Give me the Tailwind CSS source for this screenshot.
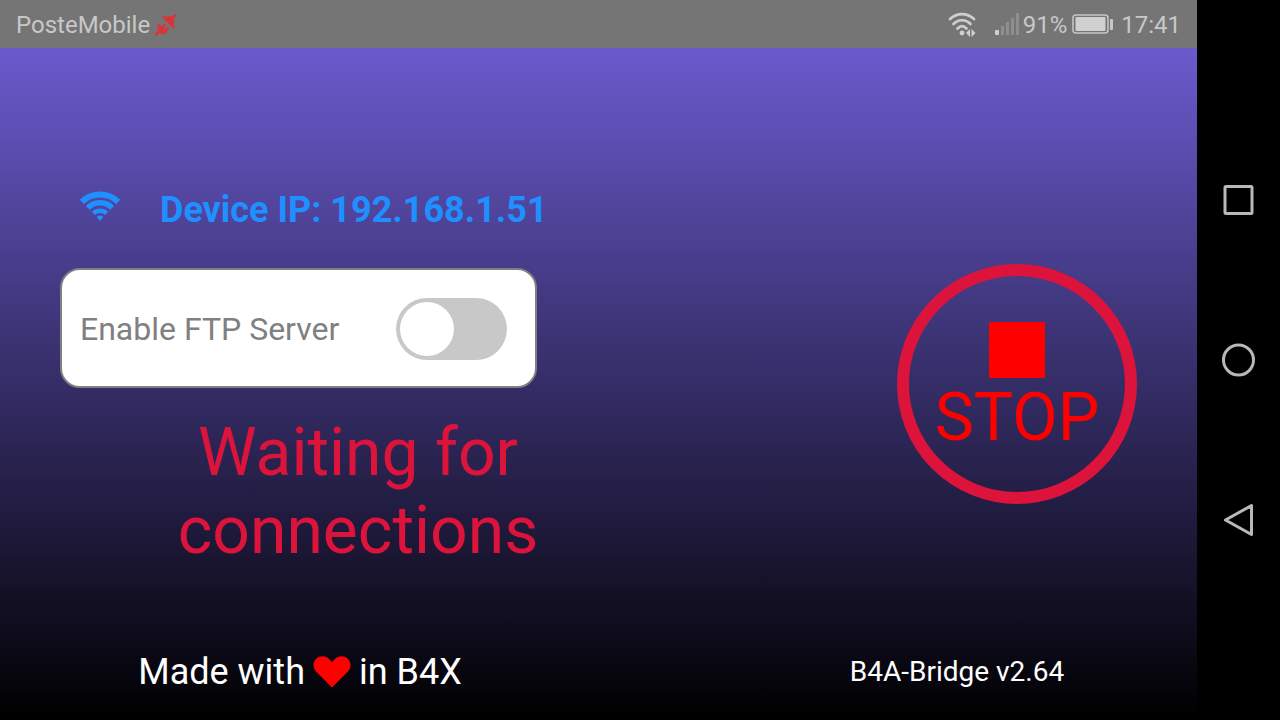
<!DOCTYPE html>
<html lang="en">
<head>
  <meta charset="UTF-8" />
  <meta name="viewport" content="width=device-width, initial-scale=1.0" />
  <title>B4A-Bridge</title>
  <script src="https://cdn.jsdelivr.net/npm/@tailwindcss/browser@4"></script>
</head>
<body class="flex min-h-screen bg-black font-['Roboto',sans-serif]">

  <div class="flex flex-1 flex-col">

    <!-- Status bar -->
    <header class="flex h-12 items-center justify-between bg-[#757575] px-4 pt-px text-2xl text-[#c8c8c8]">
      <div class="flex items-center gap-1">
        <span>PosteMobile</span>
        <svg class="h-6 w-6" viewBox="0 0 24 24" fill="#d6363b" stroke="#d6363b" stroke-linecap="round">
          <path d="M5 10.500L13.500 19c-2.500 2.500-6 2.800-8.300.7S2.500 13 5 10.500z" stroke="none" />
          <path d="M10.500 5c2.500-2.500 6-2.800 8.200-.7S21 10.500 18.500 13z" stroke="none" />
          <path d="M2 21.500l2.500-2.500M18.500 5L21 2.500M9.500 4L19.500 14M9 14l2-2M12 17l2-2" fill="none" stroke-width="2.500" />
        </svg>
      </div>
      <div class="flex items-center">
        <svg class="mr-4 h-7 w-8" viewBox="0 0 32 28" fill="none" stroke="#cfcfcf" stroke-width="2.700" stroke-linecap="round">
          <path d="M3 8c7-6.500 17-6.500 24 0M6.500 13c5-5 12-5 17 0M10.500 17.500c3-3 6-3 9 0" />
          <circle cx="15" cy="22" r="2.400" fill="#cfcfcf" stroke="none" />
          <path d="M23 18v8l-4-4zM24.500 18v8l4-4z" fill="#cfcfcf" stroke="none" />
        </svg>
        <svg class="mr-1 h-6 w-6" viewBox="0 0 24 24" fill="#8e8e8e">
          <rect x="0" y="17" width="4" height="5" rx="1" fill="#d0d0d0" />
          <rect x="6" y="13" width="3" height="9" />
          <rect x="11" y="9" width="3" height="13" />
          <rect x="16" y="5" width="3" height="17" />
          <rect x="21" y="0" width="3" height="22" />
        </svg>
        <span>91%</span>
        <svg class="ml-1 mr-2 h-6 w-[42px]" viewBox="0 0 42 24" fill="none">
          <rect x="2" y="2" width="35" height="18" rx="3" stroke="#c8c8c8" stroke-width="1.500" />
          <rect x="4.500" y="4" width="30" height="14" rx="1" fill="#d0d0d0" />
          <rect x="39" y="6" width="3" height="11" rx="1" fill="#c8c8c8" />
        </svg>
        <span>17:41</span>
      </div>
    </header>

    <main class="flex flex-1 flex-col bg-[linear-gradient(to_bottom,#6a5acd,#000000)]">
      <div class="flex flex-1 items-center justify-between px-[60px] pt-24">

        <section class="w-[596px] pb-[18px]">
          <div class="flex h-[60px] items-center pl-5 text-[#1e90ff]">
            <svg class="mr-10 mb-2 h-[30px] w-10" viewBox="0 0 40 30" fill="none" stroke="#1e90ff">
              <path d="M1.900 10.900A26 26 0 0 1 38.100 10.900" stroke-width="6" />
              <path d="M7.800 16.900A17.300 17.300 0 0 1 32.200 16.900" stroke-width="5.500" />
              <path d="M13.400 22.400A9.500 9.500 0 0 1 26.600 22.400" stroke-width="4.500" />
              <path d="M16.800 26q3.200-2.800 6.400 0L20 30z" fill="#1e90ff" stroke="none" />
            </svg>
            <p class="text-4xl font-bold">Device IP: 192.168.1.51</p>
          </div>

          <!-- FTP switch -->
          <div class="mt-7 flex h-[120px] w-[477px] items-center justify-between rounded-[20px] border-2 border-[#808080] bg-white pl-[18px] pr-7 pt-px">
            <label for="ftp" class="text-[32px] text-[#808080]">Enable FTP Server</label>
            <input id="ftp" type="checkbox" class="h-[62px] w-[111px] appearance-none rounded-full bg-[#c8c8c8] p-1 before:block before:size-[54px] before:rounded-full before:bg-white checked:bg-[#1e90ff] checked:before:ml-auto" />
          </div>

          <p class="mt-[26px] text-center text-[66px] leading-[78px] text-[#dc143c]">Waiting for connections</p>
        </section>

        <button type="button" class="flex size-60 flex-col items-center rounded-full border-12 border-[#dc143c] pt-[46px] text-[66px] leading-[80px] text-[#ff0000]">
          <svg class="size-14 shrink-0" viewBox="0 0 56 56" fill="#ff0000"><rect width="56" height="56" /></svg>
          STOP
        </button>
      </div>

      <footer class="flex h-24 items-center justify-between pl-[60px] pr-[120px] text-white">
        <p class="flex w-[480px] items-center justify-center gap-2 text-4xl">
          <span>Made with</span>
          <svg class="h-8 w-[38px]" viewBox="0 0 38 32" fill="#ff0000">
            <path d="M19 31.500L3.500 16C-.5 12-.3 6 3 3c4-4 10-3 13 0l3 3 3-3c3-3 9-4 13 0 3.300 3 3.500 9-.5 13z" />
          </svg>
          <span>in B4X</span>
        </p>
        <p class="w-60 text-center text-[28px]">B4A-Bridge v2.64</p>
      </footer>
    </main>
  </div>

  <!-- Navigation bar -->
  <nav class="flex w-[83px] flex-col items-center justify-center gap-[120px]">
    <button type="button" aria-label="Recent apps">
      <svg class="size-10" viewBox="0 0 40 40" fill="none" stroke="#b8b8b8" stroke-width="3"><rect x="6" y="6.500" width="27" height="27" rx="1" /></svg>
    </button>
    <button type="button" aria-label="Home">
      <svg class="size-10" viewBox="0 0 40 40" fill="none" stroke="#b8b8b8" stroke-width="3"><circle cx="19.500" cy="20" r="15" /></svg>
    </button>
    <button type="button" aria-label="Back">
      <svg class="size-10" viewBox="0 0 40 40" fill="none" stroke="#b8b8b8" stroke-width="3" stroke-linejoin="round"><path d="M32.500 5.500v29L6.500 20z" /></svg>
    </button>
  </nav>

</body>
</html>
